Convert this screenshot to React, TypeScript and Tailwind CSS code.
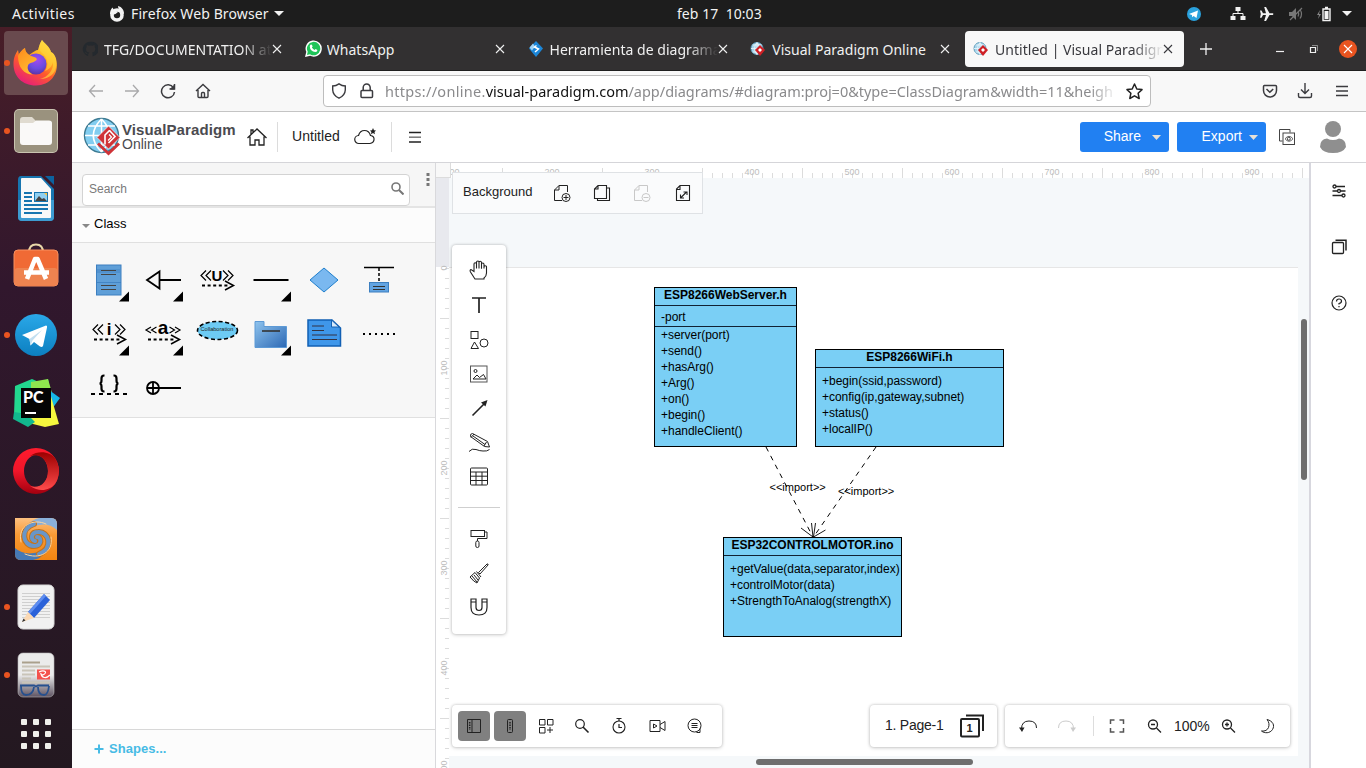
import React from "react";

type P = { children?: React.ReactNode; w?: number; h?: number; vb?: string; className?: string };

const Svg = ({ children, w = 24, h = 24, vb, className = "" }: P) => (
  <svg width={w} height={h} viewBox={vb ?? `0 0 ${w} ${h}`} fill="none" stroke="currentColor" className={`block shrink-0 ${className}`}>
    {children}
  </svg>
);

/* ---------- desktop top bar ---------- */

const TopBar = () => (
  <div className="grid h-[27px] shrink-0 grid-cols-[660px_1fr] bg-[#1d1d1d] font-['Noto_Sans',sans-serif] text-[14px] text-[#f2f2f2]">
    <div className="flex items-center pl-3">
      <span className="w-[97px] tracking-[0.45px]">Activities</span>
      <Svg w={16} h={16} className="mr-[6px]">
        <circle cx="8" cy="9" r="5" stroke="#f2f2f2" strokeWidth="3.6" />
        <path d="M1 8C1 5 2 3 3.500 1.500L5 4l4 2-2.500 2L3 9zM9 0c4 1 6 4 6 8l-3-1C11 4 9 3 9 0z" fill="#f2f2f2" stroke="none" />
      </Svg>
      <span className="tracking-[0.12px]">Firefox Web Browser</span>
      <Svg w={10} h={6} className="ml-[5px]"><path d="M0 0h10L5 5z" fill="#f2f2f2" stroke="none" /></Svg>
    </div>
    <div className="flex items-center">
      <span className="w-[525px] pb-px pl-[17px] tracking-[0.05px] whitespace-pre">{"feb 17  10:03"}</span>
      <Svg w={16} h={16} className="ml-px">
        <circle cx="8" cy="8" r="7" fill="#2aa1dc" stroke="none" />
        <path d="M3 8l9-3.600L10.500 12 7.600 10l-1.400 1.300-.300-2.300z" fill="#fff" stroke="none" />
      </Svg>
      <Svg w={16} h={16} className="ml-[28px]">
        <path d="M5.500 1h5v4h-5zM.500 10h5v4h-5zM10.500 10h5v4h-5z" fill="#f2f2f2" stroke="none" />
        <path d="M8 5v2.500M3 10V7.500h10V10" stroke="#f2f2f2" strokeWidth="1" />
      </Svg>
      <Svg w={16} h={16} className="ml-[13px]">
        <path d="M1 4.500h1.500L4 7.200h3L5.200 1H7l3.500 6.200h3.300a1 1 0 0 1 0 1.800h-3.300L7 15H5.200L7 9H4l-1.500 2.700H1L1.800 8z" fill="#f2f2f2" stroke="none" />
      </Svg>
      <Svg w={16} h={16} className="ml-[13px]">
        <path d="M1 6h3l4-4v12l-4-4H1z" fill="#777" stroke="none" />
        <path d="M10 5.500q1.500 2.500 0 5M12 3.500q3 4.500 0 9M2 14L14 2" stroke="#777" strokeWidth="1.200" />
      </Svg>
      <Svg w={18} h={16} className="ml-[11px]">
        <path d="M5 4L2 9h2l-1 4 3-5H4z" fill="#888" stroke="none" />
        <path d="M8 3h7v11.500H8zM10 1.500h3" stroke="#f2f2f2" strokeWidth="1.400" />
        <path d="M9.500 5h4v8h-4z" fill="#f2f2f2" stroke="none" />
      </Svg>
      <Svg w={10} h={6} className="ml-[9px]"><path d="M0 0h10L5 5z" fill="#f2f2f2" stroke="none" /></Svg>
    </div>
  </div>
);

/* ---------- dock ---------- */

const FirefoxIcon = () => (
  <Svg w={46} h={48}>
    <defs>
      <linearGradient id="ff1" x1=".8" y1="0" x2=".25" y2="1">
        <stop offset="0" stopColor="#fff44f" /><stop offset=".35" stopColor="#ffb020" /><stop offset=".6" stopColor="#ff5a2c" /><stop offset="1" stopColor="#e5197f" />
      </linearGradient>
      <radialGradient id="ff2" cx=".55" cy=".3" r=".7"><stop offset="0" stopColor="#a34af0" /><stop offset=".6" stopColor="#6a4ce0" /><stop offset="1" stopColor="#5a35a8" /></radialGradient>
      <linearGradient id="ff3" x1="0" y1="0" x2=".6" y2="1"><stop offset="0" stopColor="#ff8a1c" /><stop offset="1" stopColor="#ffbd30" /></linearGradient>
    </defs>
    <g stroke="none">
      <path d="M29 1c2 3 8 7 9 12 3 1 5 5 5.500 9C46 35 37 46.500 23 46.500S.500 37 .500 25C.500 18 3 14 5 11l1 5c1-3 4-6 6-7 0 3 1 5 4 7 4-3 7-5 9-5 1-4 2-7 4-10z" fill="url(#ff1)" />
      <circle cx="23" cy="25" r="10.500" fill="url(#ff2)" />
      <path d="M5 17c1-3 4-6 7-8 0 3 2 6 5 7.500l4 1.500c2 .5 4 2 2 3.500-3 2.500-7 2-8 5-1.500 4 2 8 5 9-9 0-15-7-15-18.500z" fill="url(#ff3)" />
      <path d="M29 1c-3 5-4 9 0 13 6 5 7 12 3 18 5-2 7-5 8-9 1 8-5 15-13 17 10 0 15-6 16-12 1-8-1-12-5-15-1-5-7-9-9-12z" fill="#ffd43c" opacity=".65" />
    </g>
  </Svg>
);

const FilesIcon = () => (
  <Svg w={46} h={46}>
    <g stroke="none">
      <rect x="1" y="1" width="44" height="44" rx="5" fill="#c9c4b0" />
      <rect x="2" y="2" width="42" height="42" rx="4" fill="#9a927e" />
      <path d="M7 12q0-3 3-3h9l4 4h13q3 0 3 3v6H7z" fill="#e0dbd0" />
      <path d="M7 15h13l3-2.500h13q3 0 3 3V34q0 3-3 3H10q-3 0-3-3z" fill="#faf9f8" />
    </g>
  </Svg>
);

const WriterIcon = () => (
  <Svg w={38} h={46}>
    <g stroke="none">
      <path d="M4 0h20l13 13v28q0 4-4 4H5q-4 0-4-4V4q0-4 3-4z" fill="#1775b0" />
      <path d="M1 24h36v17q0 4-4 4H5q-4 0-4-4z" fill="#3d9bd1" />
      <path d="M28 0h9v9z" fill="#0c63a0" />
      <path d="M5 2h19l10 11v28q0 1-1 1H5q-1 0-1-1V3q0-1 1-1z" fill="#f8f8f8" />
      <path d="M17 16h14v10H17z" fill="#1775b0" /><path d="M18 17h12v8H18z" fill="#8fd0f2" /><path d="M18 25l4-5 3 3 2-1 3 3z" fill="#454545" /><path d="M27 17h3v3z" fill="#f6c445" />
    </g>
    <path d="M7 17h8M7 21h8M7 25h8M7 29h24M7 33h24M7 37h18" stroke="#1775b0" strokeWidth="2" />
  </Svg>
);

const SoftwareIcon = () => (
  <Svg w={46} h={48}>
    <path d="M16 9.500q0-8 7-8t7 8" stroke="#e8d7a8" strokeWidth="2" />
    <rect x="1" y="7" width="44" height="36" rx="4" fill="#f06a35" stroke="#f79060" strokeWidth="1" />
    <rect x="1.500" y="25" width="43" height="17.500" rx="3" fill="#ee8350" stroke="none" />
    <path d="M14 36L22 16h2.500L33 36M11 29.500h25" stroke="#fff" strokeWidth="4.600" strokeLinejoin="round" />
  </Svg>
);

const TelegramIcon = () => (
  <Svg w={44} h={44}>
    <defs><linearGradient id="tg" x1="0" y1="0" x2="0" y2="1"><stop stopColor="#2aa8e8" /><stop offset="1" stopColor="#0c7fc0" /></linearGradient></defs>
    <g stroke="none">
      <circle cx="22" cy="22" r="21" fill="url(#tg)" />
      <path d="M8 22l24-9.500q1.500 0 1 2L29 33q-1 1.500-3 .500l-6-4.500-3.500 3.500-1-6.500z" fill="#fff" />
      <path d="M15.500 26L28 17 18.500 27.500l-2 5z" fill="#c3dff0" />
    </g>
  </Svg>
);

const PyCharmIcon = () => (
  <Svg w={50} h={50}>
    <g stroke="none">
      <path d="M4 8L21 1l9 4 7-4 3 15-6 25-16 5-15-9z" fill="#22d88f" />
      <path d="M20 4l17-3 4 14H20z" fill="#8fe64e" />
      <path d="M38 12l11 8-8 11z" fill="#15b8e8" />
      <path d="M39 15l9 31-14 3-20-5V36z" fill="#f5f73e" />
      <path d="M2 41l15 8 7-5-8-8-13-2z" fill="#12b88e" />
      <path d="M10 10h30v30H10z" fill="#050505" />
    </g>
    <text x="12" y="25" fill="#fff" stroke="none" className="font-['Lato',sans-serif] text-[16px] font-black">PC</text>
    <path d="M14 35h11" stroke="#fff" strokeWidth="2" />
  </Svg>
);

const OperaIcon = () => (
  <Svg w={48} h={48}>
    <defs>
      <linearGradient id="op1" x1="0" y1="0" x2="0" y2="1"><stop stopColor="#ff1b2d" /><stop offset=".5" stopColor="#f0162a" /><stop offset="1" stopColor="#a2000f" /></linearGradient>
      <linearGradient id="op2" x1="0" y1="0" x2="0" y2="1"><stop stopColor="#9c0000" /><stop offset="1" stopColor="#ff4b4b" /></linearGradient>
    </defs>
    <g stroke="none" fillRule="evenodd">
      <path d="M24 1a23 23 0 1 0 0 46 23 23 0 0 0 0-46zm0 7c7 0 12 8 12 16s-5 16-12 16-12-8-12-16 5-16 12-16z" fill="url(#op1)" />
      <path d="M18 9c10-7 21-3 25 2 5 8 5 19 0 26-5 6-15 9-25 2 9 3 18-3 18-15S27 6 18 9z" fill="url(#op2)" />
    </g>
  </Svg>
);

const SpiralIcon = () => (
  <Svg w={44} h={44}>
    <defs><linearGradient id="sp" x1="0" y1="0" x2="0" y2="1"><stop stopColor="#fcc080" /><stop offset=".4" stopColor="#f99a35" /><stop offset="1" stopColor="#f28410" /></linearGradient></defs>
    <path d="M1 1h36q6 0 6 6v36H7q-6 0-6-6z" fill="url(#sp)" stroke="none" />
    <path d="M25 1h12q6 0 6 6v6Q35 6 25 8 17 9 14 15q-3-10 11-14z" fill="#8ab0da" stroke="none" />
    <path d="M1 31q8 7 19 5 8-1 11-6 0 11-12 13H7q-6 0-6-6z" fill="#4679b5" stroke="none" />
    <g strokeLinecap="round">
      <path d="M20 7C5 12 9 29 20 29c8 0 8-9 3-9M25 37c15-6 10-23-1-22-7 0-8 8-3 9" stroke="#c4731c" strokeWidth="6" />
      <path d="M20 7C5 12 9 29 20 29c8 0 8-9 3-9M25 37c15-6 10-23-1-22-7 0-8 8-3 9" stroke="#6996c9" strokeWidth="4" />
      <path d="M7 25C3 8 20 1 32 7M37 20c3 16-12 23-26 17" stroke="#ffd49a" strokeWidth="1" />
    </g>
  </Svg>
);

const PencilDocIcon = () => (
  <Svg w={38} h={46}>
    <rect x="1" y="1" width="36" height="44" rx="5" fill="#f1f1f1" stroke="#d8d8d8" />
    <path d="M5 9.500h28M5 12.500h28M5 15.500h28M5 18.500h28M5 21.500h28M5 24.500h28M5 27.500h28M5 30.500h28M5 33.500h28" stroke="#cfcfcf" />
    <g stroke="none">
      <path d="M11 28L27 10l6 6-16 18z" fill="#2b62d9" /><path d="M11 28L27 10l2 2-16 18z" fill="#5e8df0" />
      <path d="M11 28l6 6-12 4z" fill="#fbd9b4" /><path d="M6.500 34.500l2 2L5 38z" fill="#333" />
    </g>
  </Svg>
);

const EvinceIcon = () => (
  <Svg w={38} h={46}>
    <defs><linearGradient id="ev" x1="0" y1="0" x2="0" y2="1"><stop offset=".5" stopColor="#ebebeb" /><stop offset="1" stopColor="#5d5261" /></linearGradient></defs>
    <rect x="1" y="1" width="36" height="44" rx="5" fill="url(#ev)" stroke="#bbb" strokeWidth=".6" />
    <path d="M5 10.500h18" stroke="#aaa08c" strokeWidth="2" />
    <path d="M5 14.500h28M5 18.500h13M5 22.500h13M5 26.500h9M5 30.500h28" stroke="#c9c4b8" strokeWidth="2" />
    <rect x="20" y="17.500" width="13" height="10" fill="#f4524d" stroke="none" />
    <path d="M22 20c4-2 8-1 6 1.500s-5 1-4-.5M24 22c1 4 5 5 9 1" stroke="#fff" strokeWidth="1.200" />
    <path d="M3 33.500h14l2 1 2-1h11M4 34q0 9 5 9 7 0 8-8M21 35q0 8 6 8 4 0 5-9" stroke="#27508e" strokeWidth="1.800" />
  </Svg>
);

const Dock = () => {
  const items: [React.ReactNode, boolean][] = [
    [<FirefoxIcon />, true], [<FilesIcon />, true], [<WriterIcon />, false], [<SoftwareIcon />, false], [<TelegramIcon />, true],
    [<PyCharmIcon />, false], [<OperaIcon />, false], [<SpiralIcon />, false], [<PencilDocIcon />, true], [<EvinceIcon />, true],
  ];
  return (
    <div className="flex w-[72px] shrink-0 flex-col bg-linear-to-b from-[#481d27] via-[#31172d] via-35% to-[#231820] pt-[2px]">
      {items.map(([icon, dot], i) => (
        <div key={i} className="flex h-[68px] items-center">
          <span className={`z-10 ml-1 size-[6px] rounded-full ${dot ? "bg-[#e95420]" : ""}`} />
          <div className={`-ml-[6px] flex size-16 items-center justify-center rounded ${i === 0 ? "bg-[#694a4e]" : ""}`}>{icon}</div>
        </div>
      ))}
      <div className="grid grid-cols-3 gap-[6px] self-center pt-[10px]">
        {Array.from({ length: 9 }, (_, i) => <span key={i} className="size-[6px] rounded-[1px] bg-[#f0f0ec]" />)}
      </div>
    </div>
  );
};

/* ---------- browser ---------- */

const VpFav = () => (
  <Svg w={16} h={16}>
    <circle cx="7" cy="7.500" r="6" fill="#a8d5ec" stroke="#5e9cba" />
    <path d="M7 1.500v12M1 7.500h12M2.500 4h9M2.500 11h9M7 1.500q-5 6 0 12M7 1.500q5 6 0 12" stroke="#eaf6fb" strokeWidth=".8" />
    <path d="M10 4l5 5-5 6-5-6z" fill="#cf2026" stroke="none" />
    <path d="M10 7l2 2-2 2-2-2z" fill="#fff" stroke="none" />
  </Svg>
);
const GithubFav = () => (
  <Svg w={16} h={16}><path d="M8 .8a7.300 7.300 0 0 0-2.300 14.200c.4 0 .5-.2.500-.4v-1.400c-2 .4-2.500-.9-2.500-.9-.8-1.200-1-1.200-.3-1.200.8.100 1.200.8 1.200.8.700 1.200 1.800.9 2.200.7 0-.5.300-.9.500-1.100-1.700-.2-3.300-.8-3.300-3.600 0-.8.300-1.500.7-2-.1-.2-.3-1 .1-2 0 0 .6-.2 2 .8a7 7 0 0 1 3.700 0c1.400-1 2-.8 2-.8.400 1 .200 1.800.100 2 .5.500.7 1.200.7 2 0 2.800-1.700 3.400-3.300 3.600.3.200.5.700.5 1.400v2c0 .200.100.4.5.4A7.300 7.300 0 0 0 8 .8z" fill="#24292e" stroke="none" /></Svg>
);
const WaFav = () => (
  <Svg w={17} h={17}>
    <path d="M1 16l1-4.200A7.400 7.400 0 1 1 5 15z" fill="#1fc459" stroke="#fff" strokeWidth="1.400" />
    <path d="M5.500 4.800q1-.8 1.500.3l.6 1.400-.7 1q1 1.800 2.800 2.500l.9-1 1.800.9q.2 1.900-2 2.100Q5 11 4.800 6.400 4.800 5.500 5.500 4.800z" fill="#fff" stroke="none" />
  </Svg>
);
const DrawFav = () => (
  <Svg w={16} h={16}>
    <path d="M8 0l7 7.500L8 16 1 7.500z" fill="#1c86d8" stroke="none" />
    <path d="M1.500 6.500L5 2.500l2 3-3 4z" fill="#9fd4f8" stroke="none" />
    <path d="M8.500 4.500L6.500 6l4 2-3.500 3" stroke="#fff" strokeWidth="1.500" />
  </Svg>
);
const X = () => <Svg w={10} h={10}><path d="M1 1l8 8M9 1L1 9" strokeWidth="1.100" /></Svg>;

const Tab = ({ icon, title, active, fade }: { icon: React.ReactNode; title: string; active?: boolean; fade?: boolean }) => (
  <div className={`flex h-9 w-[219px] items-center rounded pl-2 ${active ? "bg-[#f8f8f8] text-[#38383d]" : "text-[#f0f0f0]"}`}>
    <div className="flex w-[17px] shrink-0">{icon}</div>
    <div className={`ml-[5px] w-[168px] shrink-0 overflow-hidden pt-px text-[14px] tracking-[0.03px] whitespace-nowrap ${fade ? "[mask-image:linear-gradient(to_right,#000_82%,transparent)]" : ""}`}>{title}</div>
    <X />
  </div>
);

const TabBar = () => (
  <div className="flex h-[44px] shrink-0 items-center border-b border-[#1f1f1f] bg-[#323031] pl-[2px] text-[#f0f0f0]">
    <div className="flex gap-[3.75px]">
      <Tab icon={<GithubFav />} title="TFG/DOCUMENTATION at m" fade />
      <Tab icon={<WaFav />} title="WhatsApp" />
      <Tab icon={<DrawFav />} title="Herramienta de diagramas" fade />
      <Tab icon={<VpFav />} title="Visual Paradigm Online" />
      <Tab icon={<VpFav />} title="Untitled | Visual Paradigm" active fade />
    </div>
    <Svg w={12} h={12} className="ml-[15.500px]"><path d="M6 0v12M0 6h12" strokeWidth="1.300" /></Svg>
    <Svg w={10} h={10} className="ml-[63.500px]"><path d="M1 7.500h8" strokeWidth="1.200" /></Svg>
    <Svg w={10} h={10} className="ml-[24px]"><path d="M1.500 3.500h5v5h-5z" strokeWidth="1.200" /><path d="M3 1.500h5.500V7" strokeWidth=".8" opacity=".6" /></Svg>
    <div className="ml-[20px] flex size-[18px] items-center justify-center rounded-full bg-[#e95420] text-white"><X /></div>
  </div>
);

const NavBar = () => (
  <div className="flex h-[41px] shrink-0 items-center border-b border-[#c4c4c4] bg-[#f8f8f8] pl-4 text-[#3b3b3f]">
    <Svg w={16} h={16} className="text-[#a9a9ab]"><path d="M15 8H1.500M7 2L1.500 8 7 14" strokeWidth="1.300" /></Svg>
    <Svg w={16} h={16} className="ml-5 text-[#a9a9ab]"><path d="M1 8h13.500M9 2l5.500 6L9 14" strokeWidth="1.300" /></Svg>
    <Svg w={16} h={16} className="ml-5"><path d="M13.500 4.800A6.500 6.500 0 1 0 14.500 9M14.500 1v5H9.500" strokeWidth="1.500" /><path d="M14.500 2v4h-4z" fill="currentColor" /></Svg>
    <Svg w={16} h={16} className="ml-[19px]"><path d="M1 8l7-6.500L15 8M3 7v6.500q0 1 1 1h8q1 0 1-1V7M6.500 14v-3.500q0-1 1-1h1q1 0 1 1V14" strokeWidth="1.400" /></Svg>
    <div className="ml-[112px] flex h-8 w-[828px] items-center rounded border border-[#bdbdbd] bg-white pl-[7px]">
      <Svg w={16} h={16}><path d="M8 .8q3 2 6.300 2.200v4Q14 12.500 8 15.200 2 12.500 1.700 7V3Q5 2.800 8 .8z" strokeWidth="1.400" /></Svg>
      <Svg w={14} h={16} className="ml-[13px]"><path d="M2 7.500h9.500q1 0 1 1v5q0 1-1 1H2q-1 0-1-1v-5q0-1 1-1zM3.200 7.500V4.500a3.500 3.500 0 0 1 7 0v3" strokeWidth="1.500" /></Svg>
      <div className="ml-[11px] w-[733px] shrink-0 overflow-hidden pt-px font-['Noto_Sans',sans-serif] text-[14.5px] tracking-[-0.02px] whitespace-nowrap text-[#8a8a8c] [mask-image:linear-gradient(to_right,#000_96%,transparent)]">
        <span className="tracking-[0.3px]">https://online.</span><span className="tracking-normal text-[#111]">visual-paradigm.com</span>/app/diagrams/#diagram:proj=0&amp;type=ClassDiagram&amp;width=11&amp;heigh
      </div>
      <Svg w={17} h={17} className="ml-[8px] text-[#222]"><path d="M8.500 1l2.300 5 5.200.6-3.900 3.600 1.100 5.300-4.700-2.700-4.700 2.700 1.100-5.300L1 6.600 6.200 6z" strokeWidth="1.500" strokeLinejoin="round" /></Svg>
    </div>
    <Svg w={16} h={16} className="ml-[111px]"><path d="M2 2.500h11.500q1 0 1 1v4a6.500 6.500 0 0 1-13 0v-4q0-1 1-1zM4.500 6l3.300 3.300L11.200 6" strokeWidth="1.500" /></Svg>
    <Svg w={16} h={16} className="ml-[19px]"><path d="M8 0v10M4 6.500l4 4 4-4M1.500 10v3q0 1.500 1.500 1.500h10q1.500 0 1.500-1.500v-3" strokeWidth="1.400" /></Svg>
    <Svg w={14} h={14} className="ml-[22px]"><path d="M1 2.500h12M1 7h12M1 11.500h12" strokeWidth="1.300" /></Svg>
  </div>
);

/* ---------- application header ---------- */

const Caret = () => <Svg w={9} h={5} className="text-[#e6e0d8]"><path d="M0 0h9L4.500 5z" fill="currentColor" stroke="none" /></Svg>;

const AppHeader = () => (
  <div className="flex h-[51px] shrink-0 items-center border-b border-[#d5d5d9] bg-white pl-[11px] text-[#222]">
    <Svg w={38} h={40} className="-mt-px">
      <circle cx="18.500" cy="18.500" r="17" fill="#82cdf0" stroke="#3d7a92" strokeWidth="1.400" />
      <path d="M18.500 2v33M2 18.500h33M5 9h27M5 28h27M18.500 2Q2 18.500 18.500 35M18.500 2Q35 18.500 18.500 35" stroke="#fff" strokeWidth="1.500" />
      <path d="M25.500 9L37 20.500 25.500 32 14 20.500z" fill="#cf3338" stroke="#fff" strokeWidth=".6" />
      <path d="M15 26.500l10.500 10L36 26.500" stroke="#cf3338" strokeWidth="3" />
      <path d="M26.500 13.500l5.500 6-6.500 6.500M26.500 13.500L22 18v9.500" stroke="#fff" strokeWidth="1.600" />
      <path d="M26 17.500l2.500 2.500-3.500 3.500" stroke="#fff" strokeWidth="1.200" />
    </Svg>
    <div className="ml-px flex w-[124px] flex-col pb-[2px]">
      <span className="text-[15px] leading-[15px] font-bold tracking-[0.1px] text-[#4b4b50]">VisualParadigm</span>
      <span className="text-[14px] leading-[14px] text-[#4b4b50]">Online</span>
    </div>
    <Svg w={22} h={20} className="-mt-px"><path d="M1.500 11L11 2l9.500 9M4 9.500V18h5v-5h4v5h5V9.500M5 7.500V3h2v2.500" strokeWidth="1.300" /></Svg>
    <div className="ml-[9px] h-[30px] w-px bg-[#dcdcdc]" />
    <span className="ml-[14px] pb-[2px] text-[14px] tracking-[0.05px]">Untitled</span>
    <Svg w={24} h={20} className="ml-[13px]">
      <path d="M6 16.500a4 4 0 0 1-.5-8Q7 3.500 11.500 3.500t6 5Q21.500 9 21 13q-.500 3-4 3.500z" strokeWidth="1.200" />
      <path d="M20 1l1 2.300 2 .2-1.500 1.500.4 2.300L20 6l-2 1.300.4-2.300L17 3.500l2-.200z" fill="currentColor" stroke="none" />
    </Svg>
    <div className="ml-[14px] h-[30px] w-px bg-[#dcdcdc]" />
    <Svg w={12} h={12} className="ml-[17px]"><path d="M0 1.500h12M0 11h12" strokeWidth="1.500" /><path d="M0 6.200h12" stroke="#777" strokeWidth="1.500" /></Svg>
    <div className="ml-auto flex items-center">
      {["Share", "Export"].map((t, i) => (
        <div key={t} className="mr-2 flex h-[30px] w-[89px] items-center justify-end rounded-[3px] bg-[#2180f2] pr-2 text-[14px] text-white">
          <span className={i ? "mr-[7px] pb-[2px]" : "mr-[11px] pb-[2px]"}>{t}</span><Caret />
        </div>
      ))}
      <Svg w={18} h={18} className="ml-1 text-[#444]">
        <path d="M4.500 13H1.500V1.500H12V4.500" /><rect x="5" y="5" width="11.500" height="11.500" /><circle cx="10.800" cy="10.800" r="1.500" /><path d="M7 10.800q4-5 8 0-4 5-8 0z" strokeWidth=".8" />
      </Svg>
      <Svg w={28} h={34} className="mr-[19px] ml-[23px]"><circle cx="14" cy="9" r="8" fill="#8f8f8f" stroke="none" /><path d="M1 27q0-8 7-8.500 6 3 12 0Q27 19 27 27q-3 6-13 6T1 27z" fill="#8f8f8f" stroke="none" /></Svg>
    </div>
  </div>
);

/* ---------- shape palette ---------- */

const Corner = () => <path d="M47 38.500v10H37z" fill="#000" stroke="none" />;
const Guil = ({ y }: { y: number }) => (
  <path d={`M16 ${y - 5}l-5 5 5 5M21 ${y - 5}l-5 5 5 5M33 ${y - 5}l5 5-5 5M38 ${y - 5}l5 5-5 5`} strokeWidth="1.200" />
);
const DotArrow = ({ y }: { y: number }) => (
  <><path d={`M12 ${y}h26`} strokeDasharray="3 2.600" strokeWidth="2" /><path d={`M35 ${y - 4.500}l8.500 4.500-8.500 4.500`} strokeWidth="1.500" /></>
);
const glyph = "fill-black stroke-none font-bold [text-anchor:middle]";

const shapes: React.ReactNode[] = [
  <><rect x="14.500" y="12" width="24.500" height="30" fill="#5f9fd8" stroke="#3c7fc0" /><path d="M14.500 29.500h24.500M15 17h23M15 19h23" stroke="#3c7fc0" strokeWidth=".8" /><path d="M19 17.500h15M19 21.500h15M19 32.500h15M19 36.500h15" stroke="#444" strokeWidth="1.200" /><Corner /></>,
  <><path d="M24 27h21M11 27l12.500-8.500v17z" strokeWidth="1.800" /><Corner /></>,
  <><Guil y={22.5} /><text x="27" y="27.500" className={`${glyph} text-[15px]`}>U</text><DotArrow y={32.5} /></>,
  <><path d="M9.500 27h35" strokeWidth="1.800" /><Corner /></>,
  <path d="M26 15l14 12-14 12-14-12z" fill="#7ab8f0" stroke="#1f7fcc" />,
  <><path d="M12 14.500h30" strokeWidth="1.500" /><path d="M27 15v14" strokeDasharray="3 2" strokeWidth="1.500" /><rect x="17.500" y="29.500" width="19" height="9.500" fill="#62a4e2" stroke="#3c7fc0" /><path d="M21 33.500h12M21 36.500h12" stroke="#333" /></>,
  <><Guil y={22.5} /><text x="27" y="27.500" className={`${glyph} text-[17px]`}>i</text><DotArrow y={32.5} /><Corner /></>,
  <><path d="M15 20L10 23l5 3M20.500 20l-5 3 5 3M33.500 20l5 3-5 3M39 20l5 3-5 3" strokeWidth="1.200" /><text x="27" y="27" className={`${glyph} text-[19px]`}>a</text><DotArrow y={32.5} /><Corner /></>,
  <><ellipse cx="27.500" cy="23.500" rx="20" ry="9" fill="#6dcbf4" strokeWidth="1.600" strokeDasharray="4 2.500" /><text x="27" y="23.500" className="fill-[#222] stroke-none text-[5.600px] [text-anchor:middle]">Collaboration</text></>,
  <><path d="M11 14.500h9v5h22.500v21H11z" fill="url(#fold)" stroke="#5d9ad6" /><path d="M18 24h18" stroke="#333" strokeWidth="1.600" /><Corner /></>,
  <><path d="M10 13h24l8.500 8V39H10z" fill="#3f97ea" stroke="#1260b4" strokeWidth="1.500" /><path d="M33.500 13v7H41z" fill="#d5e9fb" stroke="#1260b4" /><path d="M14 19h12M14 23.500h12M14 28h25M14 32.500h25" stroke="#334" strokeWidth="1.200" /></>,
  <path d="M11 27h33" strokeDasharray="2 4" strokeWidth="2" />,
  <><path d="M22.500 14.500h-.5q-2.500 0-2.500 3v2q0 3-2 3 2 0 2 3v2q0 3 2.500 3h.5M31.500 14.500h.5q2.500 0 2.500 3v2q0 3 2 3-2 0-2 3v2q0 3-2.500 3h-.5" strokeWidth="2.200" /><path d="M9 33h36" strokeDasharray="4 4" strokeWidth="2" /></>,
  <><circle cx="17" cy="27" r="6" strokeWidth="1.800" /><path d="M11 27h34M17 21v12" strokeWidth="1.800" /></>,
];

const Palette = () => (
  <div className="flex w-[364px] shrink-0 flex-col border-r border-[#d9d9dc] bg-white text-black">
    <div className="flex h-[45px] items-start border-b-2 border-[#e4e4e4] bg-[#f6f6f6] pt-[11px] pl-[10px]">
      <div className="flex h-8 w-[328px] items-center justify-between rounded border border-[#d3d3d3] bg-white pr-[5px] pb-[2px] pl-[6px] text-[12px] text-[#7a7a7a]">
        <span>Search</span>
        <Svg w={13} h={13} className="mb-px text-[#777]"><circle cx="5" cy="5" r="4" strokeWidth="1.600" /><path d="M8 8l4.500 4.500" strokeWidth="2" /></Svg>
      </div>
      <Svg w={4} h={14} className="mt-[-1px] ml-[15.500px]"><path d="M.5 0h3v3h-3zM.5 5h3v3h-3zM.5 10h3v3h-3z" fill="#777" stroke="none" /></Svg>
    </div>
    <div className="flex h-[35px] items-center border-b border-[#e0e0e0] bg-[#fcfcfc] pb-[2px] pl-[10px] text-[13px]">
      <Svg w={8} h={4} className="mt-1"><path d="M0 0h8L4 4z" fill="#888" stroke="none" /></Svg>
      <span className="ml-1">Class</span>
    </div>
    <div className="grid h-[175px] grid-cols-[repeat(6,54px)] grid-rows-[repeat(3,54px)] border-b border-[#e0e0e0] bg-[#f7f7f7] pt-[10px] pl-[10px]">
      {shapes.map((s, i) => (
        <Svg key={i} w={54} h={54}>
          <defs><linearGradient id="fold" x1="0" y1="0" x2="1" y2="1"><stop stopColor="#8fc4ee" /><stop offset="1" stopColor="#2c68b4" /></linearGradient></defs>
          {s}
        </Svg>
      ))}
    </div>
    <div className="flex-1" />
    <div className="flex h-[39px] items-center border-t border-[#d8d8d8] bg-[#fcfcfc] pl-[22px] text-[13px] font-bold text-[#47bbe5]">
      <Svg w={10} h={10}><path d="M5 .5v9M.5 5h9" strokeWidth="2" /></Svg>
      <span className="ml-[5px] tracking-[0.05px]">Shapes...</span>
    </div>
  </div>
);

/* ---------- canvas ---------- */

const rulerLabel = "fill-[#bdbdbd] stroke-none text-[9px] [text-anchor:middle]";

const HRuler = () => (
  <Svg w={858} h={15} className="bg-white">
    {Array.from({ length: 87 }, (_, i) => {
      const x = i * 10 + 1.5;
      return <path key={i} d={`M${x} ${i % 10 === 5 ? 5 : 10}V15`} stroke="#dcdcdc" />;
    })}
    {Array.from({ length: 9 }, (_, i) => <text key={i} x={i * 100 + 1} y="12" className={rulerLabel}>{(i + 1) * 100}</text>)}
  </Svg>
);

const VRuler = () => (
  <Svg w={13} h={590}>
    <rect width="13" height="590" fill="#fff" stroke="none" />
    <rect width="13" height="89" fill="#e8e9ee" stroke="none" />
    {Array.from({ length: 51 }, (_, i) => {
      const y = 90.5 + i * 10;
      return <path key={i} d={`M${i % 10 === 5 ? 4 : 9} ${y}H13`} stroke="#dcdcdc" />;
    })}
    {Array.from({ length: 6 }, (_, i) => (
      <text key={i} transform={`translate(11 ${90 + i * 100}) rotate(-90)`} className={rulerLabel}>{i * 100}</text>
    ))}
  </Svg>
);

const ClassBox = ({ pos, title, attrs, ops, opsPad }: { pos: string; title: string; attrs?: string[]; ops: string[]; opsPad: string }) => (
  <div className={`absolute border border-black bg-[#7acff5] text-[12px] leading-4 tracking-[-0.02px] text-black ${pos}`}>
    <div className="h-[18px] border-b border-[#123] text-center leading-[15px] font-bold">{title}</div>
    {attrs && <div className="h-[21px] border-b border-[#123] pt-[3px] pl-[6px]">{attrs.map((a) => <div key={a}>{a}</div>)}</div>}
    <div className={`pl-[6px] ${opsPad}`}>{ops.map((o) => <div key={o}>{o}</div>)}</div>
  </div>
);

const tools: React.ReactNode[] = [
  <path d="M7 18.500L3.500 13q-1-2 .500-2.500l3 2V5q0-1.300 1.200-1.300T9.500 5v4.500V3.300Q9.500 2 10.800 2T12 3.300V9.500 3.500q0-1.300 1.200-1.300t1.300 1.300v6.200V5.300q0-1.300 1.200-1.300T17 5.300v4.200V8q0-1.200 1.300-1.200T19.500 8v6q0 3-2.500 5v1H8z" strokeWidth="1.100" />,
  <path d="M5 5h14M12 5v15" strokeWidth="1.700" />,
  <><rect x="4" y="3.500" width="7" height="7" /><circle cx="17" cy="15" r="4" /><path d="M7.500 14L4 20.500h7.500z" /></>,
  <><rect x="3.500" y="4" width="16.500" height="16" stroke="#555" /><circle cx="8.500" cy="9" r="1.500" /><path d="M6 17l4-4 2.500 2.500 4-3L19 17z" /></>,
  <><path d="M5.500 19.500L18 7" strokeWidth="1.600" /><path d="M20.500 4l-2 6.500-4.500-4z" fill="currentColor" stroke="none" /></>,
  <><path d="M2 20.500q3-3.500 7-2t7 1.500q4 .500 6.500-1.500" /><path d="M5.500 2.500Q3 2.500 3.500 5.500l14 10 5 .5-2-5.500zM4 6.500l3-3.500M17 15l2.500-4M6 5L18 13.500" strokeWidth="1" /></>,
  <><rect x="3.500" y="3" width="17" height="17" rx="1" /><path d="M3.500 7h17" /><path d="M3.500 11.200h17M3.500 15.500h17M9 7v13M15 7v13" /></>,
];
const tools2: React.ReactNode[] = [
  <><rect x="4" y="3.500" width="13.500" height="6" /><path d="M17.500 5h2.500v6.500H10.500V14" /><rect x="8.800" y="14" width="3.200" height="6.500" rx="1.500" /></>,
  <><path d="M20 2q1.500-.5 1 1l-8 9-1.500-1.500zM8 10.500l4.500 5.500M9.500 9.500l4.500 5.500M8 10.500l-5 4.500q4 5 7 6l2.500-5M5 14l5 6M7 13l4 5" /></>,
  <><path d="M4 3h5v8.500q0 3 3 3t3-3V3h5v8.500q0 7.500-8 7.500T4 11.500z" strokeWidth="1.200" /><path d="M4 6h5M15 6h5" /></>,
];

const float = "absolute z-10 rounded bg-white shadow-[0_0_3px_rgba(0,0,0,0.22),0_1px_4px_rgba(0,0,0,0.14)] text-[#222]";

const Workspace = () => (
  <div className="relative flex w-[875px] shrink-0 flex-col overflow-hidden border-r-2 border-[#d7d7de] bg-[#f5f8fa]">
    <div className="flex h-[15px] shrink-0">
      <div className="w-[15px] border-r border-b border-[#dcdcdc] bg-[#f8f8f8]" />
      <HRuler />
    </div>
    <div className="flex flex-1">
      <VRuler />
      <div className="mt-[89px] h-[489px] w-[849px] border-t border-[#e6e6e6] bg-white" />
    </div>

    <ClassBox pos="left-[218px] top-[124px] h-[160px] w-[143px]" title="ESP8266WebServer.h" attrs={["-port"]} ops={["+server(port)", "+send()", "+hasArg()", "+Arg()", "+on()", "+begin()", "+handleClient()"]} opsPad="pt-0" />
    <ClassBox pos="left-[379px] top-[186px] h-[98px] w-[189px]" title="ESP8266WiFi.h" ops={["+begin(ssid,password)", "+config(ip,gateway,subnet)", "+status()", "+localIP()"]} opsPad="pt-[5px]" />
    <ClassBox pos="left-[287px] top-[374px] h-[100px] w-[179px]" title="ESP32CONTROLMOTOR.ino" ops={["+getValue(data,separator,index)", "+controlMotor(data)", "+StrengthToAnalog(strengthX)"]} opsPad="pt-[5px]" />
    <span className="absolute top-[317px] left-[333.500px] text-[11px] leading-[14px] text-black">&lt;&lt;import&gt;&gt;</span>
    <span className="absolute top-[321px] left-[402px] text-[11px] leading-[14px] text-black">&lt;&lt;import&gt;&gt;</span>
    <Svg w={120} h={92} className="absolute top-[283px] left-[325px] text-black">
      <path d="M5 1l47 90M115 1L52.500 91" strokeDasharray="5 5" />
      <path d="M40 82l12 9L50.500 77M64.500 84l-12 7L54.500 77" strokeWidth=".9" />
    </Svg>

    <div className="absolute top-[9px] left-4 flex h-[42px] w-[251px] items-center border border-[#dfe2e5] bg-[#fafbfc] pl-[10px] text-[13px] text-[#222]">
      <span className="mb-[2px] w-[87px]">Background</span>
      <div className="flex gap-4">
        <Svg><path d="M17.500 11V4.500H9L4.500 9v10.500H12M9 4.500V9H4.500" /><circle cx="16" cy="16.500" r="4" /><path d="M16 14v5M13.500 16.500h5" /></Svg>
        <Svg><path d="M16.500 4.500H8L4.500 8v9.500h12zM8 4.500V8H4.500M16.500 7H19.500v12.500H7.500v-2" strokeWidth="1.100" /></Svg>
        <Svg className="text-[#c8c8c8]"><path d="M17.500 11V4.500H9L4.500 9v10.500H12M9 4.500V9H4.500" /><circle cx="16" cy="16.500" r="4" /><path d="M13.500 16.500h5" /></Svg>
        <Svg className="ml-[0.500px]"><path d="M9 4.500h9.500v15h-13V8zM9 4.500V8.500H5.500M9.500 17l6-6M9.500 13.500V17H13M12.500 11h3.500v3" strokeWidth="1.100" /></Svg>
      </div>
    </div>

    <div className={`${float} top-[82px] left-4 flex h-[389px] w-[54px] flex-col items-center pt-[9px] pr-px`}>
      {tools.map((t, i) => <div key={i} className="flex h-[34.300px] items-center"><Svg>{t}</Svg></div>)}
      <div className="mt-[13px] mb-[14px] ml-px h-px w-[42px] shrink-0 bg-[#cfcfcf]" />
      {tools2.map((t, i) => <div key={i} className="flex h-[34.300px] items-center"><Svg>{t}</Svg></div>)}
    </div>

    <div className={`${float} top-[542px] left-4 flex h-[42px] w-[270px] items-center pl-[6px]`}>
      <div className="flex h-[30px] w-8 items-center justify-center rounded bg-[#808080]"><Svg><path d="M5.500 5.500h13v13h-13zM10 5.500v13" /><path d="M7.700 8v8" strokeWidth="1.500" strokeDasharray="1.500 1" /></Svg></div>
      <div className="ml-1 flex h-[30px] w-8 items-center justify-center rounded bg-[#808080]"><Svg><rect x="9.500" y="5.500" width="5" height="13" rx="1" /><path d="M12 8v8" strokeWidth="1.500" strokeDasharray="1.500 1" /></Svg></div>
      <div className="ml-2 flex items-center">
        <Svg><path d="M5.500 5.500H11V11H5.500zM13.500 5.500H19V11h-5.500zM5.500 13.500H11V19H5.500zM16 13v6M13 16h6" /></Svg>
        <Svg className="ml-3"><circle cx="10" cy="10" r="4.300" strokeWidth="1.200" /><path d="M13 13l5.500 5.500" strokeWidth="1.600" /></Svg>
        <Svg className="ml-[13px]"><circle cx="12" cy="13" r="6" strokeWidth="1.100" /><path d="M9.500 4.500h5M12 5v2M12 10v3.500h3" strokeWidth="1.200" /></Svg>
        <Svg className="ml-[14px]"><path d="M5 6.500h10v11H5zM15 10.500l5-3v9l-5-3M8.500 10l3.500 2-3.500 2z" /></Svg>
        <Svg className="ml-[14px]"><circle cx="11.500" cy="11.500" r="6.500" /><path d="M8.500 9.500h6M8.500 11.500h6M8.500 13.500h6" /><path d="M17 14.500v4h-3.500" /></Svg>
      </div>
    </div>

    <div className={`${float} top-[542px] left-[434px] flex h-[42px] w-[127px] items-center justify-between bg-[#fafafa] pr-[13px] pl-[15px] text-[14px]`}>
      <span className="pb-px tracking-[-0.25px]">1. Page-1</span>
      <Svg w={24} h={24}><rect x="1" y="5" width="18" height="17.500" rx="1" strokeWidth="2" /><path d="M6 1.500h17V17" strokeWidth="2" /><text x="9.500" y="17.500" className="fill-current stroke-none text-[11px] font-bold [text-anchor:middle]">1</text></Svg>
    </div>

    <div className={`${float} top-[542px] left-[569px] flex h-[42px] w-[285px] items-center pl-[12px] text-[13px]`}>
      <Svg><path d="M4.500 15q0-8 7.500-8t7.500 7" /><path d="M2 13.500h5.500L5 18z" fill="currentColor" stroke="none" /></Svg>
      <Svg className="ml-[13px] text-[#ccc]"><path d="M19.500 15q0-8-7.500-8t-7.500 7" /><path d="M22 13.500h-5.500L19 18z" fill="currentColor" stroke="none" /></Svg>
      <div className="ml-[15px] h-5 w-px bg-[#ddd]" />
      <Svg className="ml-[11px] text-[#555]"><path d="M5.500 10V6H9.500M14.500 6H18.500V10M18.500 14V18H14.500M9.500 18H5.500V14" strokeWidth="1.500" /></Svg>
      <Svg className="ml-[14px]"><circle cx="10" cy="10.500" r="4.500" strokeWidth="1.300" /><path d="M13.500 14l4.500 4.500M8 10.500h4" strokeWidth="1.300" /></Svg>
      <span className="ml-[7px] w-[36px] text-[14px]">100%</span>
      <Svg className="ml-[7px]"><circle cx="10" cy="10.500" r="4.500" strokeWidth="1.300" /><path d="M13.500 14l4.500 4.500M8 10.500h4M10 8.500v4" strokeWidth="1.300" /></Svg>
      <Svg className="ml-[14px]"><path d="M12 5.500c6 1.500 8 6 5.500 10-2.500 4-8 4-11 1.500 3.500.5 6-1 7-3.500 1-3 .5-5.500-1.500-8z" /></Svg>
    </div>

    <div className="absolute top-[156px] left-[865px] h-[161px] w-[6px] rounded-full bg-[#6e6e6e]" />
    <div className="absolute top-[596px] left-[320px] h-[6px] w-[217px] rounded-full bg-[#6e6e6e]" />
  </div>
);

const RightRail = () => (
  <div className="flex flex-1 flex-col items-center gap-8 bg-white pt-4 text-[#222]">
    <Svg><path d="M8 7.500h10M5.500 12h13M5.500 16.500h10" strokeWidth="1.300" /><g fill="#fff" strokeWidth="1.300"><circle cx="7.500" cy="7.500" r="1.500" /><circle cx="12" cy="12" r="1.500" /><circle cx="16.500" cy="16.500" r="1.500" /></g></Svg>
    <Svg><rect x="5.500" y="7.500" width="11" height="11" rx="1" strokeWidth="1.300" /><path d="M8.500 5.300H19V15.500" strokeWidth="1.500" /></Svg>
    <Svg><circle cx="12" cy="12" r="7" strokeWidth="1.200" /><path d="M9.500 10.500q0-2.500 2.500-2.500t2.500 2-2.500 2.500v1M12 15v1.200" strokeWidth="1.200" /></Svg>
  </div>
);

export default function App() {
  return (
    <div className="flex h-[768px] w-[1366px] flex-col overflow-hidden bg-white font-['Liberation_Sans',Arial,sans-serif]">
      <TopBar />
      <div className="flex min-h-0 flex-1">
        <Dock />
        <div className="flex min-w-0 flex-1 flex-col">
          <div className="contents font-['Noto_Sans',sans-serif]"><TabBar /></div>
          <NavBar />
          <AppHeader />
          <div className="flex min-h-0 flex-1">
            <Palette />
            <Workspace />
            <RightRail />
          </div>
        </div>
      </div>
    </div>
  );
}
